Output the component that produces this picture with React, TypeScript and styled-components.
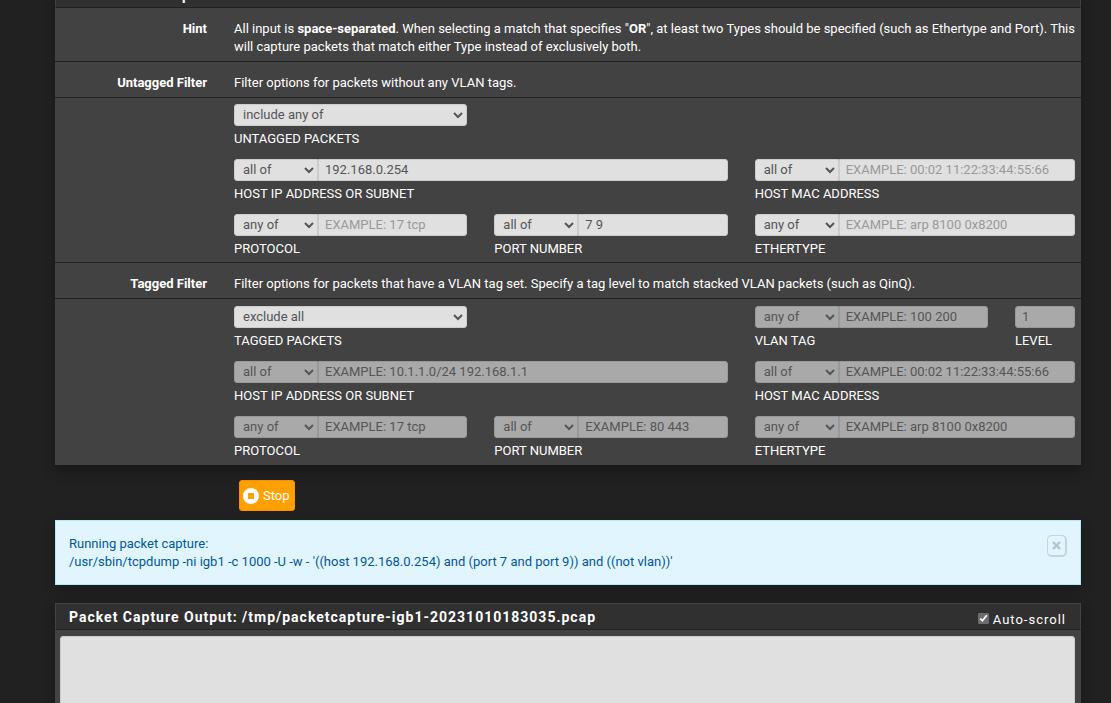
import React, { useId } from 'react';
import styled, { createGlobalStyle } from 'styled-components';

const GlobalStyle = createGlobalStyle`
  *, *::before, *::after { box-sizing: border-box; }
  body {
    margin: 0;
    background: #212121;
    color: #fff;
    font: 400 13px/18px Roboto, sans-serif;
  }
  input, select, textarea, button { font: inherit; margin: 0; }
`;

const Page = styled.main`
  height: 100vh;
  overflow: hidden;
  padding: 0 30px 0 55px;
`;

/* The view is scrolled so that the first heading is nearly out of sight. */
const Scrolled = styled.div`
  margin-top: -19px;
`;

const Panel = styled.section`
  background: #424242;
  box-shadow: 0 6px 12px rgba(0, 0, 0, 0.3);
`;

const PanelHeading = styled.header`
  display: flex;
  align-items: center;
  justify-content: space-between;
  height: 27px;
  padding: 0 14px 0 13px;
  border: 1px solid #424242;
  border-bottom-color: #212121;
  background: #303030;
`;

const PanelTitle = styled.h2`
  margin: 0;
  font-size: 14px;
  font-weight: 700;
  letter-spacing: 1px;
`;

const FormRow = styled.div`
  display: grid;
  grid-template-columns: 152px 1fr;
  column-gap: 27px;
  padding: 12px 6px 5px 0;
  border-bottom: 1px solid #212121;
`;

const RowLabel = styled.div`
  font-weight: 700;
  text-align: right;
`;

const RowText = styled.p`
  margin: 0;
`;

const FieldRow = styled(FormRow)`
  padding: 6px 6px 4px 0;

  &:last-child {
    padding-top: 7px;
    padding-bottom: 5px;
    border-bottom: 0;
  }
`;

const FieldGrid = styled.div`
  grid-column: 2;
  display: grid;
  grid-template-columns: repeat(3, minmax(0, 1fr)) 60px;
  gap: 11px 27px;
`;

const FieldBox = styled.div<{ $column: string }>`
  grid-column: ${(p) => p.$column};
  display: flex;
  flex-direction: column;
  gap: 4px;
`;

const ControlGroup = styled.div`
  display: flex;
  height: 22px;

  & > select + input {
    border-top-left-radius: 0;
    border-bottom-left-radius: 0;
  }
`;

const Select = styled.select<{ $joined?: boolean }>`
  flex: ${(p) => (p.$joined ? '0 0 84px' : '1')};
  min-width: 0;
  padding: 0 0 2px 4px;
  border: 1px solid #ccc;
  border-radius: ${(p) => (p.$joined ? '3px 0 0 3px' : '3px')};
  background: #e0e0e0;
  color: #555;

  &:disabled {
    border-color: #999;
    background: #a9a9a9;
    opacity: 1;
  }
`;

const TextInput = styled.input`
  flex: 1;
  min-width: 0;
  padding: 0 6px;
  border: 1px solid #ccc;
  border-radius: 3px;
  background: #e0e0e0;
  color: #555;

  &::placeholder { color: #999; opacity: 1; }

  &:disabled {
    border-color: #999;
    background: #a9a9a9;
  }
  &:disabled::placeholder { color: #555; }
`;

const FieldLabel = styled.label`
  text-transform: uppercase;
  white-space: nowrap;
`;

const Actions = styled.div`
  padding: 15px 0 9px 184px;
`;

const StopButton = styled.button`
  display: flex;
  align-items: center;
  gap: 4px;
  height: 31px;
  padding: 0 4px 0 3px;
  border: 1px solid #ff8f00;
  border-radius: 3px;
  background: #ffa000;
  color: #fff;
`;

const Alert = styled.div`
  display: flex;
  align-items: flex-start;
  justify-content: space-between;
  margin-bottom: 18px;
  padding: 14px 13px 13px;
  border: 1px solid #b2ebf2;
  background: #e1f5fe;
  color: #01579b;
  box-shadow: 0 6px 12px rgba(0, 0, 0, 0.2);
`;

const AlertText = styled.p`
  margin: 0;
`;

const CloseButton = styled.button`
  display: flex;
  justify-content: center;
  width: 20px;
  height: 22px;
  padding: 5px 0 0;
  border: 1px solid #c6d3d9;
  border-width: 1px 2px 2px 1px;
  border-radius: 5px;
  background: transparent;
  color: #b4c4cb;
`;

const AutoScroll = styled.label`
  display: flex;
  align-items: center;
  gap: 4px;
  padding-top: 6px;
  font-size: 13px;
  font-weight: 400;
  letter-spacing: 1px;
`;

const Checkbox = styled.input`
  width: 11px;
  height: 11px;
  margin: 0 0 3px;
  accent-color: #6b6b6b;
`;

const OutputBody = styled.div`
  padding: 6px 6px 6px 5px;
`;

const Output = styled.textarea`
  display: block;
  width: 100%;
  height: 300px;
  border: 1px solid #ccc;
  border-radius: 3px;
  background: #e0e0e0;
  color: #555;
  resize: none;
`;

const StopIcon = () => (
  <svg width="16" height="16" viewBox="0 0 16 16" aria-hidden="true">
    <path
      fill="#fff"
      fillRule="evenodd"
      d="M8 0a8 8 0 1 0 0 16A8 8 0 0 0 8 0ZM5.5 5h5a.5.5 0 0 1 .5.5v5a.5.5 0 0 1-.5.5h-5a.5.5 0 0 1-.5-.5v-5a.5.5 0 0 1 .5-.5Z"
    />
  </svg>
);

const CloseIcon = () => (
  <svg width="9" height="9" viewBox="0 0 9 9" aria-hidden="true">
    <path d="M1 1l7 7M8 1L1 8" stroke="currentColor" strokeWidth="2.4" fill="none" />
  </svg>
);

interface FieldProps {
  label: string;
  column: string;
  match?: string;
  text?: boolean;
  value?: string;
  placeholder?: string;
  disabled?: boolean;
}

const matches = ['any of', 'all of', 'include any of', 'exclude all'];

const Field = ({ label, column, match, text = true, value, placeholder, disabled }: FieldProps) => {
  const id = useId();
  return (
    <FieldBox $column={column}>
      <ControlGroup>
        {match && (
          <Select
            id={text ? undefined : id}
            aria-label={text ? `${label} match` : undefined}
            $joined={text}
            defaultValue={match}
            disabled={disabled}
          >
            {matches.map((m) => (
              <option key={m}>{m}</option>
            ))}
          </Select>
        )}
        {text && (
          <TextInput
            id={id}
            type="text"
            defaultValue={value}
            placeholder={placeholder}
            disabled={disabled}
          />
        )}
      </ControlGroup>
      <FieldLabel htmlFor={id}>{label}</FieldLabel>
    </FieldBox>
  );
};

const MAC = 'EXAMPLE: 00:02 11:22:33:44:55:66';
const ETHER = 'EXAMPLE: arp 8100 0x8200';

export default function App() {
  return (
    <Page>
      <GlobalStyle />
      <Scrolled>
        <Panel>
          <PanelHeading>
            <PanelTitle>Custom Filter Options</PanelTitle>
          </PanelHeading>
          <FormRow>
            <RowLabel>Hint</RowLabel>
            <RowText>
              All input is <b>space-separated</b>. When selecting a match that specifies "<b>OR</b>
              ", at least two Types should be specified (such as Ethertype and Port). This will
              capture packets that match either Type instead of exclusively both.
            </RowText>
          </FormRow>
          <FormRow>
            <RowLabel>Untagged Filter</RowLabel>
            <RowText>Filter options for packets without any VLAN tags.</RowText>
          </FormRow>
          <FieldRow>
            <FieldGrid>
              <Field label="Untagged Packets" column="1" match="include any of" text={false} />
              <Field label="Host IP Address or Subnet" column="1 / 3" match="all of" value="192.168.0.254" />
              <Field label="Host MAC Address" column="3 / 5" match="all of" placeholder={MAC} />
              <Field label="Protocol" column="1" match="any of" placeholder="EXAMPLE: 17 tcp" />
              <Field label="Port Number" column="2" match="all of" value="7 9" />
              <Field label="Ethertype" column="3 / 5" match="any of" placeholder={ETHER} />
            </FieldGrid>
          </FieldRow>
          <FormRow>
            <RowLabel>Tagged Filter</RowLabel>
            <RowText>
              Filter options for packets that have a VLAN tag set. Specify a tag level to match
              stacked VLAN packets (such as QinQ).
            </RowText>
          </FormRow>
          <FieldRow>
            <FieldGrid>
              <Field label="Tagged Packets" column="1" match="exclude all" text={false} />
              <Field label="VLAN Tag" column="3" match="any of" placeholder="EXAMPLE: 100 200" disabled />
              <Field label="Level" column="4" placeholder="1" disabled />
              <Field
                label="Host IP Address or Subnet"
                column="1 / 3"
                match="all of"
                placeholder="EXAMPLE: 10.1.1.0/24 192.168.1.1"
                disabled
              />
              <Field label="Host MAC Address" column="3 / 5" match="all of" placeholder={MAC} disabled />
              <Field label="Protocol" column="1" match="any of" placeholder="EXAMPLE: 17 tcp" disabled />
              <Field label="Port Number" column="2" match="all of" placeholder="EXAMPLE: 80 443" disabled />
              <Field label="Ethertype" column="3 / 5" match="any of" placeholder={ETHER} disabled />
            </FieldGrid>
          </FieldRow>
        </Panel>

        <Actions>
          <StopButton type="button">
            <StopIcon />
            Stop
          </StopButton>
        </Actions>

        <Alert role="status">
          <AlertText>
            Running packet capture:
            <br />
            /usr/sbin/tcpdump -ni igb1 -c 1000 -U -w - '((host 192.168.0.254) and (port 7 and port
            9)) and ((not vlan))'
          </AlertText>
          <CloseButton type="button" aria-label="Close">
            <CloseIcon />
          </CloseButton>
        </Alert>

        <Panel>
          <PanelHeading>
            <PanelTitle>Packet Capture Output: /tmp/packetcapture-igb1-20231010183035.pcap</PanelTitle>
            <AutoScroll>
              <Checkbox type="checkbox" defaultChecked />
              Auto-scroll
            </AutoScroll>
          </PanelHeading>
          <OutputBody>
            <Output aria-label="Packet capture output" readOnly />
          </OutputBody>
        </Panel>
      </Scrolled>
    </Page>
  );
}
